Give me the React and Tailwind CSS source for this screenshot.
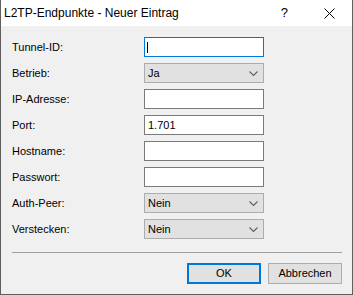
import React from 'react';

const rows = [
  { label: 'Tunnel-ID:', kind: 'focus' },
  { label: 'Betrieb:', kind: 'select', value: 'Ja' },
  { label: 'IP-Adresse:', kind: 'input' },
  { label: 'Port:', kind: 'input', value: '1.701' },
  { label: 'Hostname:', kind: 'input' },
  { label: 'Passwort:', kind: 'input' },
  { label: 'Auth-Peer:', kind: 'select', value: 'Nein' },
  { label: 'Verstecken:', kind: 'select', value: 'Nein' },
];

const Chevron = () => (
  <svg width="9" height="5" viewBox="0 0 9 5" className="mr-[5px]">
    <path d="M0.5 0.5 L4.5 4.5 L8.5 0.5" fill="none" stroke="#606060" strokeWidth="1.1" />
  </svg>
);

const Field = ({ kind, value }) => {
  if (kind === 'select') {
    return (
      <div className="w-[120px] h-[20px] bg-[#e1e1e1] border border-[#adadad] flex items-center justify-between pl-[3px] text-black">
        <span>{value}</span>
        <Chevron />
      </div>
    );
  }
  if (kind === 'focus') {
    return (
      <div className="w-[120px] h-[20px] bg-white border border-[#0078d7] flex items-center pl-[2px]">
        <div className="w-px h-[11px] bg-black" />
      </div>
    );
  }
  return (
    <div className="w-[120px] h-[20px] bg-white border border-[#7a7a7a] flex items-center pl-[3px] text-black">
      {value}
    </div>
  );
};

export default function App() {
  return (
    <div
      className="w-[353px] h-[295px] bg-[#f0f0f0] border-x border-b border-[#5f5f5f] flex flex-col text-[11px] text-black"
      style={{ fontFamily: '"Liberation Sans", Arial, sans-serif' }}
    >
      <div className="h-[26px] bg-white flex items-center shrink-0">
        <span className="pl-[3px] text-[12px] flex-1">L2TP-Endpunkte - Neuer Eintrag</span>
        <span className="text-[13px] mr-[36px]">?</span>
        <svg width="11" height="11" viewBox="0 0 11 11" className="mr-[17px]">
          <path d="M0.5 0.5 L10.5 10.5 M10.5 0.5 L0.5 10.5" stroke="#000" strokeWidth="1" />
        </svg>
      </div>
      <div className="flex flex-col gap-[6px] pt-[11px] pl-[11px]">
        {rows.map((r) => (
          <div key={r.label} className="flex items-center h-[20px]">
            <span className="w-[132px]">{r.label}</span>
            <Field kind={r.kind} value={r.value} />
          </div>
        ))}
      </div>
      <div className="mt-[13px] ml-[11px] w-[330px] h-px bg-[#a0a0a0]" />
      <div className="flex justify-end gap-[7px] mt-[10px] mr-[10px]">
        <button className="w-[74px] h-[21px] bg-[#e1e1e1] border-2 border-[#0078d7]">OK</button>
        <button className="w-[74px] h-[21px] bg-[#e1e1e1] border border-[#adadad]">Abbrechen</button>
      </div>
    </div>
  );
}
